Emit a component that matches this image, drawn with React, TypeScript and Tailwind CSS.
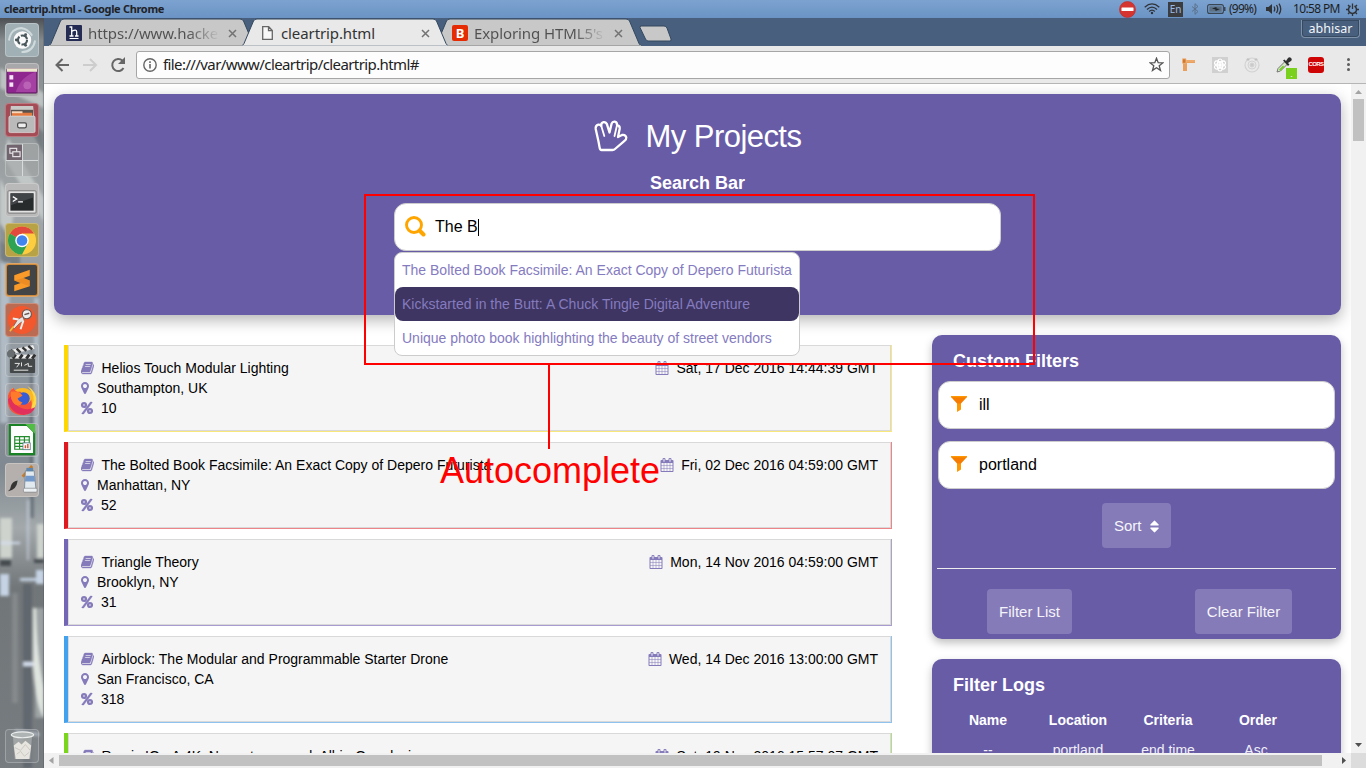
import React from "react";

const BOOK =
  "M1703 478q40 57 18 129l-275 906q-19 64-76.5 107.5t-122.5 43.5h-923q-77 0-148.5-53.5t-99.5-131.5q-24-67-2-127 0-4 3-27t4-37q1-8-3-21.500t-3-19.500q2-11 8-21t16.500-23.500 16.500-23.500q23-38 45-91.500t30-91.500q3-10 .5-30t-.5-28q3-11 17-28t17-23q21-36 42-92t25-90q1-9-2.500-32t.5-28q4-13 22-30.500t22-22.500q19-26 42.500-84.500t27.500-96.500q1-8-3-25.500t-2-26.500q2-8 9-18t18-23 17-21q8-12 16.500-30.500t15-35 16-36 19.500-32 26.500-23.500 36-11.500 47.500 5.500l-1 3q38-9 51-9h761q74 0 114 56t18 130l-274 906q-36 119-71.500 153.500t-128.500 34.500h-869q-27 0-38 15-11 16-1 43 24 70 144 70h923q29 0 56-15.500t35-41.500l300-987q7-22 5-57 38 15 59 43zm-1064 2q-4 13 2 22.500t20 9.500h608q13 0 25.500-9.500t16.500-22.500l21-64q4-13-2-22.500t-20-9.500h-608q-13 0-25.500 9.500t-16.500 22.500zm-83 256q-4 13 2 22.500t20 9.500h608q13 0 25.500-9.500t16.500-22.500l21-64q4-13-2-22.500t-20-9.500h-608q-13 0-25.500 9.500t-16.500 22.500z";
const MARKER =
  "M1152 640q0-106-75-181t-181-75-181 75-75 181 75 181 181 75 181-75 75-181zm256 0q0 109-33 179l-364 774q-16 33-47.500 52t-67.500 19-67.500-19-46.500-52l-365-774q-33-70-33-179 0-212 150-362t362-150 362 150 150 362z";
const CALENDAR =
  "M192 1664h288v-288h-288v288zm352 0h320v-288h-320v288zm-352-352h288v-320h-288v320zm352 0h320v-320h-320v320zm-352-384h288v-288h-288v288zm736 736h320v-288h-320v288zm-384-736h320v-288h-320v288zm768 736h288v-288h-288v288zm-384-352h320v-320h-320v320zm-352-864v-288q0-13-9.500-22.500t-22.500-9.500h-64q-13 0-22.500 9.500t-9.500 22.500v288q0 13 9.500 22.500t22.500 9.500h64q13 0 22.500-9.500t9.500-22.500zm736 864h288v-320h-288v320zm-384-384h320v-288h-320v288zm384 0h288v-288h-288v288zm32-480v-288q0-13-9.500-22.500t-22.500-9.500h-64q-13 0-22.500 9.500t-9.500 22.500v288q0 13 9.500 22.500t22.500 9.500h64q13 0 22.500-9.500t9.500-22.500zm384-64v1280q0 52-38 90t-90 38h-1408q-52 0-90-38t-38-90v-1280q0-52 38-90t90-38h128v-96q0-66 47-113t113-47h64q66 0 113 47t47 113v96h384v-96q0-66 47-113t113-47h64q66 0 113 47t47 113v96h128q52 0 90 38t38 90z";
const SORT =
  "M1408 1088q0 26-19 45l-448 448q-19 19-45 19t-45-19l-448-448q-19-19-19-45t19-45 45-19h896q26 0 45 19t19 45zm0-384q0 26-19 45t-45 19h-896q-26 0-45-19t-19-45 19-45l448-448q19-19 45-19t45 19l448 448q19 19 19 45z";

function TabShape({ active }: { active?: boolean }) {
  return (
    <svg className="absolute inset-0" width="206" height="28" viewBox="0 0 206 28">
      <path d="M0 28 L2 25.500 L11.500 3 Q12.500 1 15 1 L191 1 Q193.500 1 194.500 3 L204 25.500 L206 28Z" fill={active ? "#e9e9e9" : "#c8c8c8"} stroke="#33485f" strokeWidth="1" />
      {active ? <rect x="0" y="27.500" width="206" height="1" fill="#e9e9e9" /> : <rect x="0" y="27" width="206" height="1" fill="#a5a5a5" />}
    </svg>
  );
}

function CloseX() {
  return (
    <svg width="9" height="9" viewBox="0 0 9 9" className="shrink-0">
      <path d="M1 1L8 8M8 1L1 8" stroke="#737373" strokeWidth="1.500" />
    </svg>
  );
}

function Tab({ icon, title, active, fade }: { icon: React.ReactNode; title: React.ReactNode; active?: boolean; fade?: boolean }) {
  return (
    <div className={active ? "relative z-10 -mr-[13px] h-7 w-[206px] shrink-0" : "relative -mr-[13px] h-7 w-[206px] shrink-0"}>
      <TabShape active={active} />
      <div className="relative flex h-full items-center pl-[17px] pr-[18px] pt-[2px]">
        <span className="flex w-4 shrink-0 justify-center">{icon}</span>
        <span
          className={
            fade
              ? "ml-[6px] w-[132px] overflow-hidden whitespace-nowrap bg-linear-to-r from-[#505050] from-75% to-[#c8c8c8] bg-clip-text font-['Noto_Sans',sans-serif] text-[15px] tracking-[-0.100px] text-transparent"
              : "ml-[6px] w-[132px] overflow-hidden whitespace-nowrap font-['Noto_Sans',sans-serif] text-[15px] tracking-[-0.100px] text-[#333]"
          }
        >
          {title}
        </span>
        <span className="ml-auto">
          <CloseX />
        </span>
      </div>
    </div>
  );
}

function Tray() {
  return (
    <div className="flex h-full items-center pr-[7px] text-[#303338]">
      <svg width="17" height="17" viewBox="0 0 17 17">
        <circle cx="8.500" cy="8.500" r="8" fill="#d6342f" stroke="#b52b2b" strokeWidth=".6" />
        <rect x="2.500" y="6.500" width="12" height="3.500" rx=".5" fill="#fff" />
      </svg>
      <svg width="16" height="12" viewBox="0 0 16 12" className="ml-[8px]" fill="none" stroke="currentColor" strokeWidth="1.300">
        <path d="M.7 4.200Q8-2.400 15.300 4.200M3 6.400Q8 1.800 13 6.400M5.200 8.500Q8 5.800 10.800 8.500" />
        <circle cx="8" cy="10" r="1.200" fill="currentColor" stroke="none" />
      </svg>
      <span className="ml-[8px] flex h-[15px] w-[15px] items-center justify-center bg-[#3b3c40] font-['Noto_Sans',sans-serif] text-[10px] leading-[14px] text-[#9dbbe0]">En</span>
      <svg width="8" height="12" viewBox="0 0 8 12" className="ml-[8px]" fill="none" stroke="#5b7189" strokeWidth="1">
        <path d="M1 3.500L7 8.500L4 11.300V.7L7 3.500L1 8.500" />
      </svg>
      <svg width="19" height="10" viewBox="0 0 19 10" className="ml-[8px]">
        <rect x=".6" y=".6" width="15.800" height="8.800" rx="2" fill="none" stroke="#3a4652" strokeWidth="1.100" />
        <rect x="2.300" y="2.300" width="12.400" height="5.400" fill="#5d7084" />
        <path d="M17 3h1.500v4H17z" fill="#3a4652" />
        <path d="M5 4.500L9.500 3V4.500L13 5L8.500 7V5.400Z" fill="#1d252c" />
      </svg>
      <span className="ml-[3px] w-[28px] whitespace-nowrap font-['Noto_Sans',sans-serif] text-[12px] tracking-[-0.750px] text-[#222]">(99%)</span>
      <svg width="16" height="12" viewBox="0 0 16 12" className="ml-[9px]" fill="none" stroke="currentColor" strokeWidth="1.300">
        <path d="M0 4h2.500L6 1v10L2.500 8H0z" fill="currentColor" stroke="none" />
        <path d="M8 3.500Q9.500 6 8 8.500M10.500 2Q13 6 10.500 10M13 .7Q16.500 6 13 11.300" />
      </svg>
      <span className="ml-[11px] w-[45px] whitespace-nowrap font-['Noto_Sans',sans-serif] text-[12px] tracking-[-0.650px] text-[#1e1e1e]">10:58 PM</span>
      <svg width="13" height="13" viewBox="0 0 13 13" className="ml-[8px]" fill="none" stroke="currentColor">
        <path d="M4.500 3A4 4 0 1 0 8.500 3" strokeWidth="1.500" />
        <path d="M6.500 .5v5.500M0 6.500h2.500M10.500 6.500H13M2 11l1.800-1.800M11 11L9.200 9.200M2 2l1.500 1.500M11 2L9.500 3.500M6.500 10.500V13" strokeWidth="1.300" />
      </svg>
    </div>
  );
}

function LauncherBackdrop() {
  return (
    <svg className="absolute inset-0" width="44" height="750" viewBox="0 0 44 750" preserveAspectRatio="none">
      <defs>
        <linearGradient id="lb" x1="0" x2="0" y1="0" y2="1">
          <stop offset="0" stopColor="#4c5054" />
          <stop offset=".03" stopColor="#858b8c" />
          <stop offset=".25" stopColor="#a2a7aa" />
          <stop offset=".4" stopColor="#929ba2" />
          <stop offset=".6" stopColor="#808991" />
          <stop offset=".68" stopColor="#a3a9ab" />
          <stop offset=".76" stopColor="#717679" />
          <stop offset="1" stopColor="#777c80" />
        </linearGradient>
        <filter id="soft" x="-20%" y="-5%" width="140%" height="110%">
          <feGaussianBlur stdDeviation="1.400" />
        </filter>
      </defs>
      <rect width="44" height="750" fill="url(#lb)" />
      <g filter="url(#soft)">
        <path d="M0 50l44 25v15L0 70zM8 120l36 60v24L4 140zM0 160l14 30-4 40-10-8z" fill="#d0d5d4" opacity=".7" />
        <path d="M22 95l22 20v22zM0 205l20 30v30L0 240z" fill="#535b61" opacity=".5" />
        <path d="M0 245h10l-2 160H0zM34 280h5v190h-5z" fill="#bdcbd6" opacity=".7" />
        <path d="M30 330h4v170h-4z" fill="#4f5a66" opacity=".6" />
        <path d="M0 500h12v40H0zM37 506h7v34h-7z" fill="#ced3cd" />
        <path d="M0 542h11v6H0zM34 541h10v4H34z" fill="#444b50" />
        <path d="M0 556h9v22H0zM20 560h24v3H20zM36 552h8v14h-8z" fill="#c5d3e4" />
        <path d="M23 566h9v184h-9z" fill="#5a6068" opacity=".7" />
        <path d="M35 590h9v110h-9z" fill="#a8aeae" opacity=".8" />
        <path d="M33 650Q36 690 44 700V670Q37 640 36 590h-3z" fill="#dfe4df" />
        <path d="M15 712l24 3v3l-24-3zM23 644h10v4H23zM0 524h20v2H0z" fill="#d7e0f1" />
        <path d="M27 482h2v60h-2z" fill="#d7e0f1" opacity=".6" />
        <path d="M12 575h6v110h-6z" fill="#969999" opacity=".5" />
      </g>
      <rect x="43" width="1" height="750" fill="#4a5157" opacity=".35" />
    </svg>
  );
}

function Tile({ bg, children }: { bg: string; children: React.ReactNode }) {
  return (
    <div className={"h-[34px] w-[34px] shrink-0 rounded-[4px] border border-white/25 " + bg}>
      <svg width="32" height="32" viewBox="0 0 33 33">
        {children}
      </svg>
    </div>
  );
}

function Launcher() {
  return (
    <div className="relative h-[750px] w-11 shrink-0 overflow-hidden">
      <LauncherBackdrop />
      <div className="relative flex h-full flex-col gap-[6px] pb-[5px] pl-[5px] pt-[5px]">
        <Tile bg="bg-[#a1b0b5]">
          <path d="M3 17Q5 4 17 4M30 17Q28 29 16 29M8 7Q19 0 27 12" fill="none" stroke="#cfdadd" strokeWidth="2" />
          <circle cx="17" cy="16.500" r="9" fill="#fafafa" />
          <circle cx="17" cy="16.500" r="4.700" fill="none" stroke="#49565a" strokeWidth="2.200" strokeDasharray="8.300 1.600" />
          <circle cx="10.700" cy="16.500" r="1.500" fill="#49565a" />
          <circle cx="20.200" cy="11" r="1.500" fill="#49565a" />
          <circle cx="20.200" cy="22" r="1.500" fill="#49565a" />
        </Tile>
        <Tile bg="bg-[#a8a7aa]">
          <rect x="1" y="5" width="31" height="25" rx="1" fill="#8f2690" stroke="#5d205d" />
          <path d="M10 29Q16 12 31 8V29z" fill="#bb5cb4" opacity=".5" />
          <circle cx="22" cy="22" r="4" fill="#cf85c9" opacity=".5" />
          <rect x="1" y="4.500" width="31" height="3.500" fill="#ece9cf" />
          <rect x="3.500" y="11.500" width="4" height="4.500" fill="#f5e4f5" />
          <rect x="3.500" y="19" width="4" height="4.500" fill="#f5e4f5" />
        </Tile>
        <Tile bg="bg-[#a44b55]">
          <path d="M5 2h23l1 11H4z" fill="#c9c9c7" />
          <rect x="5" y="6" width="23" height="8" fill="#59514c" />
          <rect x="6" y="9" width="21" height="5" fill="#e4793f" />
          <rect x="6" y="7.500" width="11" height="2" fill="#f9d8ba" />
          <rect x="3" y="12.500" width="27" height="17" rx="1.500" fill="#b9bab9" stroke="#e3e3e3" strokeWidth=".7" />
          <rect x="12" y="19.500" width="9" height="5" rx="1.500" fill="#eee" stroke="#4d4d4d" strokeWidth="1.300" />
        </Tile>
        <Tile bg="bg-[#a1a5a5]/60">
          <rect x="1" y="1" width="15.500" height="15.500" fill="#72646f" />
          <path d="M17 0v33M0 17h33" stroke="#d9dddd" strokeWidth="1" />
          <rect x="4" y="4.500" width="7" height="5" fill="none" stroke="#e7e3e6" strokeWidth="1.200" />
          <rect x="7" y="8" width="7.500" height="5" fill="#72646f" stroke="#e7e3e6" strokeWidth="1.200" />
        </Tile>
        <Tile bg="bg-[#b9b9b9]">
          <rect x="2" y="7" width="29" height="23" rx="1" fill="#e2e2e2" stroke="#777" />
          <rect x="4.500" y="9.500" width="24" height="18" fill="#282b2c" />
          <path d="M5 10h23v4L5 22z" fill="#51575a" opacity=".6" />
          <path d="M7 13l4 2.500L7 18M12.500 18.500h5" stroke="#fff" strokeWidth="1.300" fill="none" />
        </Tile>
        <Tile bg="bg-[#b8a246]">
          <circle cx="16.500" cy="17" r="14.500" fill="#fccd3f" />
          <path d="M16.500 17L3.900 9.800A14.500 14.500 0 0 1 29 9.800H16.500z" fill="#e14a3c" />
          <path d="M16.500 17L3.900 9.800A14.500 14.500 0 0 0 16.500 31.500L22.500 20z" fill="#2da353" />
          <circle cx="16.500" cy="17" r="7" fill="#fff" />
          <circle cx="16.500" cy="17" r="5.500" fill="#4285ee" />
        </Tile>
        <Tile bg="bg-[#d08a3c]">
          <rect x="1" y="1" width="31" height="31" rx="2" fill="#424445" />
          <path d="M8.500 11.500L24.500 6v6L18 14.500L24.500 17v6L8.500 28v-6L15 19.500L8.500 17z" fill="#fa9a29" />
          <path d="M8.500 17l6.500 2.500 9.500 3.500V17L18 14.500z" fill="#dd7d1d" opacity=".45" />
        </Tile>
        <Tile bg="bg-[#ba6b52]">
          <circle cx="16.500" cy="16.500" r="14.500" fill="#f2572d" />
          <circle cx="21.500" cy="10.500" r="4.700" fill="#eee" stroke="#6b5750" strokeWidth="1.200" />
          <path d="M19 11l5-1.500" stroke="#6b5750" strokeWidth="1.500" />
          <path d="M17 13l-5 3-5 8 1 2 6-6 5-3z" fill="#e8e3e0" stroke="#774a3c" strokeWidth=".7" />
          <path d="M18 17l-3 9M13 16l-6-1" stroke="#eee" strokeWidth="2" />
          <path d="M4 28l4-5" stroke="#f4bd36" strokeWidth="1.700" />
        </Tile>
        <Tile bg="bg-[#9ba1a6]/40">
          <rect x="4" y="13" width="26" height="17" rx="1" fill="#454849" />
          <path d="M1 7L28 1l1.500 4L3 11z" fill="#ececec" />
          <path d="M5 6l4 4M11 4.800l4 4M17 3.500l4 3.500M23 2l4 3.500" stroke="#333" strokeWidth="2.500" />
          <rect x="4" y="11" width="26" height="4" fill="#efefef" />
          <path d="M7 15l3-4M14 15l3-4M21 15l3-4M27 15l3-4" stroke="#303030" strokeWidth="3" />
          <circle cx="5" cy="10" r="4" fill="#686e70" />
          <path d="M9 20h5l-3 4M16 19v4M19 22l4-2v3h4M8 27h15" stroke="#e9e9e9" strokeWidth="1" fill="none" />
        </Tile>
        <Tile bg="bg-[#aaa8a9]/40">
          <circle cx="17" cy="18" r="14" fill="#fbb725" />
          <path d="M22 2Q33 8 31 20Q28 32 16 31Q2 28 2 16Q2 8 7 4Q8 8 12 7Q8 15 16 17Q19 26 27 22Q32 12 22 2Z" fill="#ffd848" />
          <path d="M2 12Q4 5 8 4Q9 8 15 8L17 11L12 14Q14 21 21 20Q25 19 26 16Q29 29 18 32Q4 32 2 20z" fill="#f6543a" />
          <path d="M2 16Q4 30 18 32Q28 31 30 24Q22 28 14 24Q6 20 5 13z" fill="#e2305c" />
          <circle cx="18" cy="15" r="6.500" fill="#385cd4" />
          <path d="M5 8Q14 7 17 12L12 15Q13 18 17 19Q14 24 9 21Q4 16 5 8z" fill="#ff7a2b" />
        </Tile>
        <Tile bg="bg-[#9aa09d]/40">
          <path d="M4 1h18l7 7v23H4z" fill="#fdfdfd" stroke="#198225" strokeWidth="2.200" />
          <path d="M20 0h10v10z" fill="#52bd45" />
          <path d="M9 13h15v13H9zM9 16.500h15M9 20h15M9 23h15M14 13v13M19 13v13" fill="none" stroke="#238b2c" strokeWidth="1.200" />
          <rect x="17.500" y="19.500" width="7.500" height="7" fill="#fff" stroke="#547488" strokeWidth=".8" />
          <path d="M20 25v-3M22.500 25v-4.500" stroke="#d35635" strokeWidth="1.500" />
        </Tile>
        <Tile bg="bg-[#b5b0ad]">
          <path d="M27 2L12 19" stroke="#c67b29" strokeWidth="3" />
          <path d="M17 13l-6 7" stroke="#aeb0b1" strokeWidth="4" />
          <path d="M12 17Q11 27 2 28Q5 26 5 23Q6 18 12 17z" fill="#353535" />
          <path d="M20 7h9l2 20H19z" fill="#e2e9ef" stroke="#677887" strokeWidth=".7" />
          <path d="M20 12h9.500l.5 6H19.500z" fill="#7399ca" />
          <rect x="21" y="4" width="7" height="3.500" fill="#5f87ae" />
          <rect x="18" y="25" width="14" height="4" rx="1" fill="#eef1f4" stroke="#70777f" strokeWidth=".6" />
        </Tile>
        <div className="flex-1" />
        <Tile bg="bg-[#858b90]/50">
          <path d="M7 5h20l-2 25H9z" fill="#b9bdbb" opacity=".6" />
          <ellipse cx="17" cy="5" rx="11.500" ry="3" fill="#aeb4b4" stroke="#eceeed" strokeWidth="1.200" />
          <path d="M8 16l5-4 3 3 4-4 6 5-2 14H10z" fill="#e7e5df" />
          <path d="M9 18l6 3 5-6 5 6M11 25l4-3 4 5 5-4" stroke="#cbc8c1" strokeWidth="1" fill="none" />
        </Tile>
      </div>
    </div>
  );
}

function BrowserChrome() {
  return (
    <div className="shrink-0">
      <div className="flex h-7 items-start bg-[#485f7d] pl-[5px]">
        <Tab
          icon={
            <span className="flex h-4 w-4 items-center justify-center rounded-[1px] bg-[#252c54]">
              <svg width="12" height="14" viewBox="0 0 12 14" fill="none" stroke="#fff" strokeWidth="1.300">
                <path d="M1.500 1H3.700V10M1.500 10H5.500M3.700 5.500Q8.700 2.500 8.700 6V10M7 10H10.500" />
                <path d="M1.500 12.500H10.500" strokeWidth="1" />
              </svg>
            </span>
          }
          title="https://www.hackerearth"
          fade
        />
        <Tab
          active
          icon={
            <svg width="11" height="14" viewBox="0 0 11 14">
              <path d="M.7 .7h6L10.300 4.500v8.800H.7zM6.500 .7v4h4" fill="#f8f8f8" stroke="#666" strokeWidth="1.300" />
            </svg>
          }
          title="cleartrip.html"
        />
        <Tab
          icon={<span className="flex h-4 w-4 items-center justify-center rounded-[2px] bg-[#e42b04] font-['Noto_Sans',sans-serif] text-[13px] font-bold leading-none text-white">B</span>}
          title="Exploring HTML5's"
          fade
        />
        <svg width="34" height="18" viewBox="0 0 34 18" className="ml-[11px] mt-[7px]">
          <path d="M1.500 1H25Q27 1 28 3L32 14Q32.500 16 31 16H9Q7.500 16 6.500 14L1 2.500Z" fill="#c8c8c8" stroke="#33485f" />
        </svg>
        <div className="ml-auto mr-[6px] mt-[2px] flex h-[18px] w-[59px] items-center justify-center rounded-b-[4px] border border-t-0 border-[#7d91a9] pt-px font-['Noto_Sans',sans-serif] text-[12.500px] leading-4 text-[#f3f6f9] shadow-[inset_0_0_0_1px_#364a62]">
          abhisar
        </div>
      </div>
      <div className="flex h-[38px] items-center border-b border-[#b5b5b5] bg-[#e9e9e9] pl-[11px]">
        <svg width="15" height="14" viewBox="0 0 15 14" fill="none" stroke="#666" strokeWidth="2">
          <path d="M14 7H1.500M7.500 1L1.500 7l6 6" />
        </svg>
        <svg width="15" height="14" viewBox="0 0 15 14" fill="none" stroke="#cdcdcd" strokeWidth="2" className="ml-[13px]">
          <path d="M0 7h13M7 1l6 6-6 6" />
        </svg>
        <svg width="16" height="16" viewBox="0 0 16 16" className="ml-[12px]">
          <path d="M13.500 11A6 6 0 1 1 12.500 3.800" fill="none" stroke="#666" strokeWidth="2" />
          <path d="M15 0v7H8z" fill="#666" />
        </svg>
        <div className="ml-[10px] flex h-7 w-[1034px] shrink-0 items-center rounded-[3px] border border-[#a6a6a6] bg-[#fdfdfd] pl-[6px] pr-[5px]">
          <svg width="14" height="14" viewBox="0 0 14 14">
            <circle cx="7" cy="7" r="6.200" fill="none" stroke="#666" strokeWidth="1.400" />
            <path d="M7 6v4.500M7 3.300v1.600" stroke="#666" strokeWidth="1.600" />
          </svg>
          <span className="ml-[6px] whitespace-nowrap font-['Noto_Sans',sans-serif] text-[15px] tracking-[-0.600px] text-[#222]">file:///var/www/cleartrip/cleartrip.html#</span>
          <svg width="15" height="15" viewBox="0 0 15 15" className="ml-auto">
            <path d="M7.500 1.200l1.700 4.500 4.700.2-3.700 2.900 1.300 4.600-4-2.600-4 2.600 1.300-4.600L1.100 5.900l4.700-.2z" fill="none" stroke="#555" strokeWidth="1.300" />
          </svg>
        </div>
        <svg width="15" height="14" viewBox="0 0 15 14" className="ml-[11px]">
          <path d="M1 2h13v3H6v8H2V5H1z" fill="#e9a05c" />
          <path d="M1.500 .8h3.500v4.500h-3.500zM5 3h9" fill="#cf7930" stroke="#f0b982" strokeWidth=".8" />
        </svg>
        <div className="ml-[16px] flex h-4 w-4 items-center justify-center bg-[#d0d0d0]">
          <svg width="14" height="14" viewBox="0 0 14 14" fill="none" stroke="#fff" strokeWidth="1.200">
            <ellipse cx="7" cy="7" rx="6" ry="2.700" transform="rotate(30 7 7)" />
            <ellipse cx="7" cy="7" rx="6" ry="2.700" transform="rotate(90 7 7)" />
            <ellipse cx="7" cy="7" rx="6" ry="2.700" transform="rotate(150 7 7)" />
            <circle cx="7" cy="7" r="1.300" fill="#fff" />
          </svg>
        </div>
        <svg width="16" height="16" viewBox="0 0 16 16" className="ml-[16px]" fill="none" stroke="#d2d2d2">
          <circle cx="8" cy="8" r="7" strokeWidth="1.200" />
          <circle cx="8" cy="8" r="4" />
          <circle cx="8" cy="8" r="2" fill="#cacaca" />
          <circle cx="4" cy="2.500" r="1.200" fill="#bbb" />
          <circle cx="12" cy="2.500" r="1.200" fill="#bbb" />
        </svg>
        <div className="relative ml-[16px] h-4 w-[18px]">
          <svg width="16" height="16" viewBox="0 0 16 16">
            <path d="M1 15L2 11.500L9 4.500l2.500 2.500-7 7z" fill="#d7e8c9" stroke="#777" />
            <path d="M3 12.500l4-4 1.500 1.500-4 4z" fill="#7acb2c" />
            <path d="M7 3.500l1.500-1L10 4l2-3q1.500-1.500 3 0t0 3l-3 2 1.500 1.500-1.500 1.500z" fill="#303030" />
          </svg>
          <span className="absolute left-[10px] top-[11px] flex h-[11px] w-[11px] items-end justify-center bg-[#7ad11d] text-[9px] leading-[10px] text-white">.</span>
        </div>
        <div className="ml-[14px] flex h-4 w-4 items-center justify-center overflow-visible rounded-[3px] bg-[#cf0505] font-['Liberation_Sans',sans-serif] text-[6px] font-bold tracking-[-0.600px] text-white">CORS</div>
        <div className="ml-[23px] flex flex-col gap-[2px]">
          <span className="h-[3px] w-[3px] rounded-full bg-[#5d5d5d]" />
          <span className="h-[3px] w-[3px] rounded-full bg-[#5d5d5d]" />
          <span className="h-[3px] w-[3px] rounded-full bg-[#5d5d5d]" />
        </div>
      </div>
    </div>
  );
}

type Project = { title: string; place: string; pct: string; date: string; tone: string };

const projects: Project[] = [
  { title: "Helios Touch Modular Lighting", place: "Southampton, UK", pct: "10", date: "Sat, 17 Dec 2016 14:44:39 GMT", tone: "border-l-[#ffd700] border-r-[#f8e87c] border-b-[#f8e87c]" },
  { title: "The Bolted Book Facsimile: An Exact Copy of Depero Futurista", place: "Manhattan, NY", pct: "52", date: "Fri, 02 Dec 2016 04:59:00 GMT", tone: "border-l-[#de1a20] border-r-[#ed8588] border-b-[#ed8588]" },
  { title: "Triangle Theory", place: "Brooklyn, NY", pct: "31", date: "Mon, 14 Nov 2016 04:59:00 GMT", tone: "border-l-[#7266b5] border-r-[#a9a4c0] border-b-[#a79bcf]" },
  { title: "Airblock: The Modular and Programmable Starter Drone", place: "San Francisco, CA", pct: "318", date: "Wed, 14 Dec 2016 13:00:00 GMT", tone: "border-l-[#42a2ed] border-r-[#8fc2ed] border-b-[#8fc2ed]" },
  { title: "Remix IO - A 4K, Nougat-powered, All-in-One device", place: "San Francisco, CA", pct: "103", date: "Sat, 19 Nov 2016 15:57:07 GMT", tone: "border-l-[#7bd51d] border-r-[#b2df85] border-b-[#b2df85]" },
];

function ProjectCard({ p }: { p: Project }) {
  return (
    <div className={"h-[87px] shrink-0 border-b border-l-4 border-r " + p.tone}>
      <div className="flex h-full justify-between border border-[#d9d9d9] bg-[#f5f5f5] px-3 pt-3 text-[14px] leading-5 text-black">
        <div className="whitespace-nowrap">
          <div className="flex h-5 items-center">
            <svg width="13" height="14" viewBox="64 0 1664 1792" fill="#857bbb" stroke="#857bbb" strokeWidth="50"><path d={BOOK} /></svg>
            <span className="ml-[7.500px]">{p.title}</span>
          </div>
          <div className="flex h-5 items-center">
            <svg width="8" height="14" viewBox="384 0 1024 1792" fill="#857bbb"><path d={MARKER} /></svg>
            <span className="ml-[8px]">{p.place}</span>
          </div>
          <div className="flex h-5 items-center">
            <svg width="12" height="14" viewBox="0 0 1536 1792">
              <circle cx="384" cy="512" r="250" fill="none" stroke="#857bbb" strokeWidth="290" />
              <circle cx="1152" cy="1280" r="250" fill="none" stroke="#857bbb" strokeWidth="290" />
              <path d="M1440 192q0 20-13 38L371 1638q-19 26-51 26H160q-26 0-45-19t-19-45q0-20 13-38L1165 154q19-26 51-26h160q26 0 45 19t19 45z" fill="#857bbb" stroke="#857bbb" strokeWidth="40" />
            </svg>
            <span className="ml-[8px]">{p.pct}</span>
          </div>
        </div>
        <div className="flex h-5 items-center whitespace-nowrap">
          <svg width="14" height="14" viewBox="0 0 1792 1792" fill="#857bbb"><path d={CALENDAR} /></svg>
          <span className="ml-[7px]">{p.date}</span>
        </div>
      </div>
    </div>
  );
}

function FilterField({ value }: { value: string }) {
  return (
    <div className="flex h-12 items-center rounded-[12px] border border-[#ccc] bg-white pl-3 text-[16px] text-black">
      <svg width="16" height="16" viewBox="0 0 16 16" className="-mt-[2px]">
        <path d="M6 7h4v6.500L6 16z" fill="#ff9800" />
        <path d="M0 1h16L10 7.500H6z" fill="#f57c00" />
        <path d="M0 0h16v1.300H0z" fill="#ff9800" />
      </svg>
      <span className="ml-3">{value}</span>
    </div>
  );
}

const logs = [
  ["Name", "--"],
  ["Location", "portland"],
  ["Criteria", "end time"],
  ["Order", "Asc"],
];

function Sidebar() {
  return (
    <div className="flex w-[409px] shrink-0 flex-col gap-5">
      <section className="h-[304px] shrink-0 rounded-[10px] bg-[#685ca7] px-[5px] pt-4 text-white shadow-[0_4px_8px_rgba(0,0,0,0.25)]">
        <h2 className="ml-4 h-[30px] text-[18px] font-bold leading-[21px]">Custom Filters</h2>
        <div className="flex flex-col gap-3 px-px">
          <FilterField value="ill" />
          <FilterField value="portland" />
        </div>
        <div className="mt-[14px] flex justify-center">
          <div className="flex h-[45px] w-[69px] items-center rounded-[4px] bg-[#857bb8] pl-3 pt-px text-[15px] text-[#f5f4fa]">
            Sort
            <svg width="15" height="15" viewBox="0 0 1792 1792" fill="#fff" className="ml-[5px]"><path d={SORT} /></svg>
          </div>
        </div>
        <hr className="mt-5 border-0 border-t border-[#eee]" />
        <div className="mt-5 flex justify-between pl-[50px] pr-[44px] text-[15px] text-[#f5f4fa]">
          <div className="flex h-[45px] w-[85px] items-center justify-center rounded-[4px] bg-[#857bb8] pt-px">Filter List</div>
          <div className="flex h-[45px] w-[97px] items-center justify-center rounded-[4px] bg-[#857bb8] pt-px">Clear Filter</div>
        </div>
      </section>
      <section className="h-[200px] shrink-0 rounded-[10px] bg-[#685ca7] px-[11px] pt-4 text-white shadow-[0_4px_8px_rgba(0,0,0,0.25)]">
        <h2 className="ml-[10px] text-[18px] font-bold leading-[21px]">Filter Logs</h2>
        <div className="mt-[9px] grid grid-cols-[90px_90px_90px_90px] text-center text-[14px] leading-[30px]">
          {logs.map(([h, v]) => (
            <div key={h}>
              <div className="font-bold">{h}</div>
              <div className={h === "Order" ? "pr-1 text-[#f0eff7]" : "text-[#f0eff7]"}>{v}</div>
            </div>
          ))}
        </div>
      </section>
    </div>
  );
}

function Header() {
  return (
    <header className="relative z-10 flex h-[221px] shrink-0 flex-col items-center rounded-[10px] bg-[#685ca7] text-white shadow-[0_5px_15px_rgba(0,0,0,0.3)]">
      <div className="mt-[24px] flex h-9 items-center">
        <svg width="34" height="32" viewBox="0 0 34 32" fill="none" stroke="#fff" strokeWidth="2.300" strokeLinejoin="round" strokeLinecap="round">
          <path d="M7.500 30Q6 30 5.600 27.500L4.500 21.500L1.700 9Q1.300 5.500 4.300 4.600Q6.500 4.300 7.300 6Q6.800 2.700 9.500 2.100Q12 1.800 13 4.300L15.500 12.500L17.600 3.700Q18.500 1.400 20.700 1.600Q23.300 2 23 5.200Q26 5.500 25.700 8.700L24 17L28 15Q31.500 14.300 32.300 17.500Q32.500 19.300 30.500 20.800L21 29Q20 30 18.500 30Z" />
          <path d="M7.300 6L10.300 16M23 5.200L20.500 16" strokeWidth="1.800" />
        </svg>
        <h1 className="ml-[18px] pt-[2px] text-[31px] leading-9 tracking-[-0.560px]">My Projects</h1>
      </div>
      <div className="mt-[17px] text-[18px] font-bold leading-6">Search Bar</div>
      <div className="relative mt-[8px] h-12 w-[607px]">
        <div className="flex h-12 items-center rounded-[12px] border border-[#ccc] bg-white pl-[10px] text-[16px] text-black">
          <svg width="21" height="21" viewBox="0 0 21 21" fill="none" stroke="#ffa500" className="-mt-[2px]">
            <circle cx="9" cy="9" r="7.500" strokeWidth="2.900" />
            <path d="M14.500 14.500L18.500 18.500" strokeWidth="4" strokeLinecap="round" />
          </svg>
          <span className="ml-[9px]">The B</span>
          <span className="h-[17px] w-px bg-black" />
        </div>
        <ul className="absolute left-0 top-[49px] w-[406px] rounded-[8px] border border-[#ccc] bg-white text-[14px] leading-[34px] text-[#857bbf]">
          <li className="whitespace-nowrap pl-[7px]">The Bolted Book Facsimile: An Exact Copy of Depero Futurista</li>
          <li className="whitespace-nowrap rounded-[8px] bg-[#3e3562] pl-[7px] tracking-[0.030px]">Kickstarted in the Butt: A Chuck Tingle Digital Adventure</li>
          <li className="whitespace-nowrap pl-[7px]">Unique photo book highlighting the beauty of street vendors</li>
        </ul>
      </div>
    </header>
  );
}

function Arrow({ d, fill }: { d: string; fill: string }) {
  return (
    <svg width="15" height="15" viewBox="0 0 15 15" className="shrink-0">
      <path d={d} fill={fill} />
    </svg>
  );
}

export default function App() {
  return (
    <div className="relative flex h-[768px] w-[1366px] flex-col overflow-hidden bg-white font-['Liberation_Sans',sans-serif]">
      <div className="flex h-[18px] shrink-0 items-center justify-between bg-linear-to-b from-[#7ca2d0] to-[#6b94c4] pl-1">
        <span className="font-['Noto_Sans',sans-serif] text-[11px] font-bold tracking-[-0.320px] text-[#1f2226]">cleartrip.html - Google Chrome</span>
        <Tray />
      </div>
      <div className="flex h-[750px]">
        <Launcher />
        <div className="flex w-[1322px] flex-col">
          <BrowserChrome />
          <div className="flex h-[669px] shrink-0">
            <main className="flex h-[669px] w-[1307px] flex-col overflow-hidden px-[10px] pt-[10px]">
              <Header />
              <div className="mt-5 flex justify-between pl-[10px]">
                <div className="flex w-[828px] flex-col gap-[10px] pt-[10px]">
                  {projects.map((p) => (
                    <ProjectCard key={p.title} p={p} />
                  ))}
                </div>
                <Sidebar />
              </div>
            </main>
            <div className="flex w-[15px] flex-col items-center bg-[#f1f1f1]">
              <Arrow d="M4 10L7.500 6L11 10z" fill="#a3a3a3" />
              <div className="h-[42px] w-[11px] bg-[#c1c1c1]" />
              <div className="flex-1" />
              <Arrow d="M4 5L7.500 9L11 5z" fill="#505050" />
            </div>
          </div>
          <div className="flex h-[15px] shrink-0 items-center bg-[#f1f1f1]">
            <Arrow d="M9.500 4L5 7.500L9.500 11z" fill="#a3a3a3" />
            <div className="h-[11px] w-[1263px] bg-[#c1c1c1]" />
            <div className="flex-1" />
            <Arrow d="M6 4L10 7.500L6 11z" fill="#505050" />
            <div className="h-[15px] w-[15px] bg-[#dcdcdc]" />
          </div>
        </div>
      </div>
      <div className="pointer-events-none absolute left-[364px] top-[194px] z-20 h-[171px] w-[671px] border-2 border-[#ff0000]" />
      <div className="pointer-events-none absolute left-[548px] top-[365px] z-20 h-[84px] w-[2px] bg-[#ff0000]" />
      <div className="pointer-events-none absolute left-[440px] top-[450px] z-20 whitespace-nowrap text-[36px] leading-[42px] text-[#ff0000]">Autocomplete</div>
    </div>
  );
}
